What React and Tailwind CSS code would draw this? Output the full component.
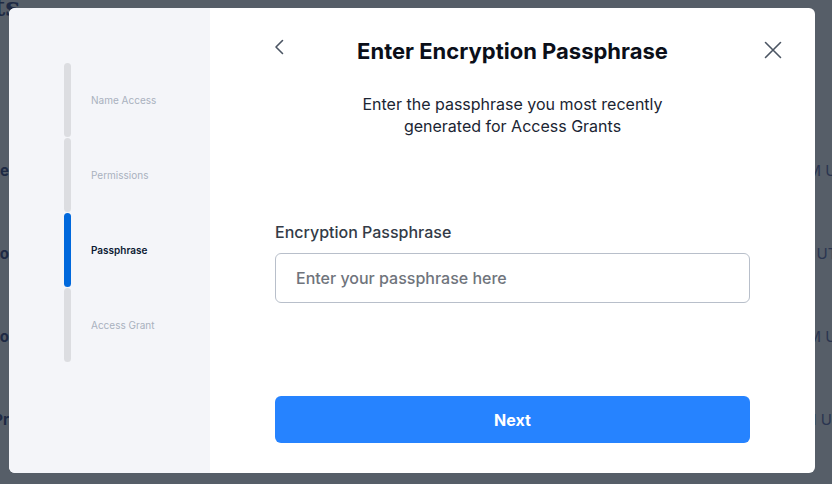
import React, { useEffect, useRef } from "react";

const steps = [
  { label: "Name Access", active: false },
  { label: "Permissions", active: false },
  { label: "Passphrase", active: true },
  { label: "Access Grant", active: false },
];

const bgRows = [
  { left: "Name", right: "PM UTC", rpad: "pl-[798px]" },
  { left: "Auto", right: "3 UTC", rpad: "pl-[803px]" },
  { left: "Auto", right: "PM UTC", rpad: "pl-[798px]" },
  { left: "Pr", right: "PI UTC", rpad: "pl-[803px]" },
];

export default function App() {
  const ref = useRef(null);
  useEffect(() => {
    if (ref.current) ref.current.focus();
  }, []);
  return (
    <div
      className="relative w-[832px] h-[484px] overflow-hidden bg-[#565e68]"
      style={{ fontFamily: "Inter, 'Noto Sans', sans-serif" }}
    >
      {/* background page (dimmed) */}
      <div className="flex flex-col">
        <div className="h-[12px] relative">
          <div className="absolute right-[812px] -top-[12px] text-[26px] font-bold text-[#1e2a44] whitespace-nowrap" style={{ fontFamily: "'DejaVu Serif', serif" }}>
            Grants
          </div>
        </div>
        <div className="flex flex-col mt-[148px] gap-[61px]">
          {bgRows.map((r, i) => (
            <div key={i} className="relative h-[22px] text-[15px] text-[#1e2a44]">
              <div className="absolute right-[823px] top-0 font-bold whitespace-nowrap">{r.left}</div>
              <div className={`whitespace-nowrap ${r.rpad} text-[#2a3550]`}>{r.right}</div>
            </div>
          ))}
        </div>
      </div>

      {/* modal */}
      <div className="absolute left-[9px] top-[8px] w-[806px] h-[465px] bg-white rounded-[6px] overflow-hidden flex">
        <aside className="w-[201px] bg-[#f4f5f9] pt-[55px] pl-[55px]">
          <div className="flex flex-col gap-[1px]">
            {steps.map((s) => (
              <div key={s.label} className="flex items-center gap-[20px]">
                <div
                  className={`w-[7px] h-[74px] rounded-full ${s.active ? "bg-[#0068dc]" : "bg-[#dcdde1]"}`}
                />
                <span
                  className={`text-[10px] ${s.active ? "text-[#0b1a33] font-semibold" : "text-[#a9b1be]"}`}
                >
                  {s.label}
                </span>
              </div>
            ))}
          </div>
        </aside>

        <main className="flex-1 flex flex-col px-[65px] pt-[28px]">
          <div className="relative">
            <h2 className="text-center text-[22px] leading-[30px] font-bold text-[#0b0f19]">
              Enter Encryption Passphrase
            </h2>
            <button className="absolute -left-[5px] top-[-1px] w-[18px] h-[24px] flex items-center justify-center text-[#4b5563]">
              <svg width="10" height="16" viewBox="0 0 10 16" fill="none">
                <path d="M8.5 1.5L2 8l6.5 6.5" stroke="currentColor" strokeWidth="1.6" strokeLinecap="round" strokeLinejoin="round" />
              </svg>
            </button>
            <button className="absolute -right-[33px] top-[4px] w-[20px] h-[20px] flex items-center justify-center text-[#4b5563]">
              <svg width="18" height="18" viewBox="0 0 18 18" fill="none">
                <path d="M1.5 1.5l15 15M16.5 1.5l-15 15" stroke="currentColor" strokeWidth="1.6" strokeLinecap="round" />
              </svg>
            </button>
          </div>

          <p className="mt-[27px] text-center text-[16px] leading-[22px] text-[#1b2533]">
            Enter the passphrase you most recently
            <br />
            generated for Access Grants
          </p>

          <label className="mt-[83px] text-[16px] leading-[24px] font-medium text-[#333b47]">
            Encryption Passphrase
          </label>

          <input
            ref={ref}
            type="text"
            placeholder="Enter your passphrase here"
            className="mt-[9px] h-[50px] w-full rounded-[6px] border border-[#b8bfca] px-[20px] text-[16px] font-medium text-[#1b2533] placeholder:text-[#6f747c] outline-none caret-[#0068dc]"
          />

          <button className="mt-[93px] h-[47px] w-full rounded-[6px] bg-[#2683ff] text-white text-[16px] font-bold">
            Next
          </button>
        </main>
      </div>
    </div>
  );
}
